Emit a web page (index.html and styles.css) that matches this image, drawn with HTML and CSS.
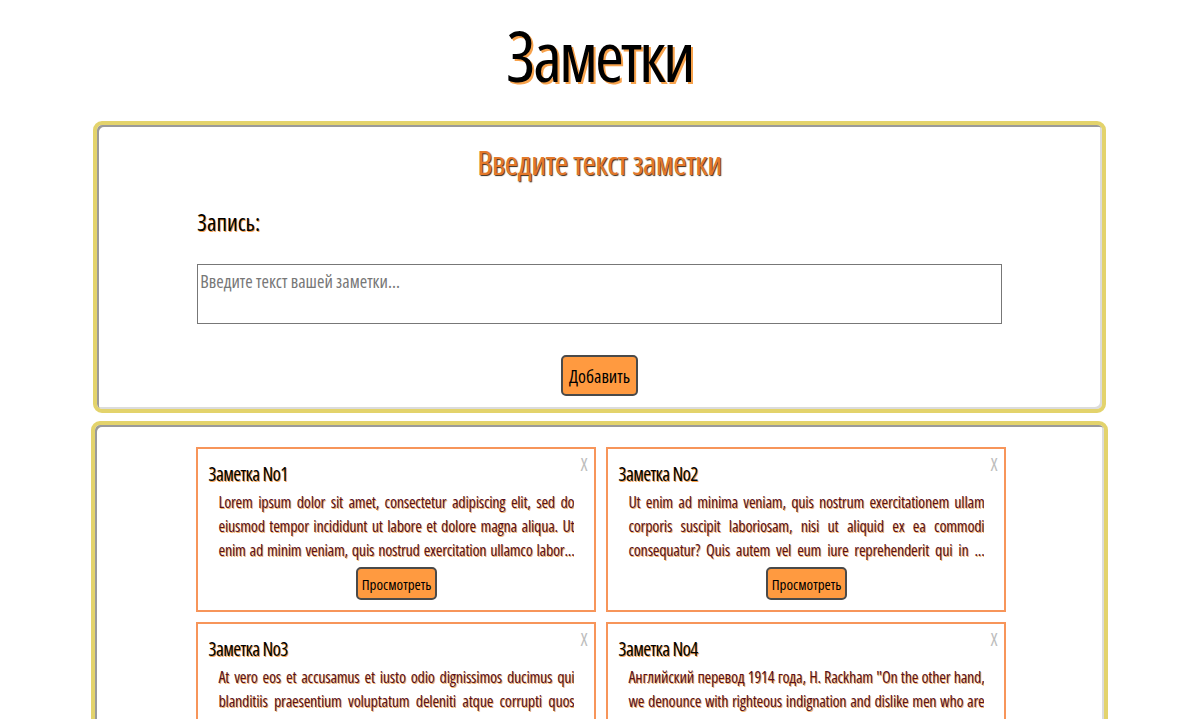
FILE: index.html
```html
<!DOCTYPE html>
<html lang="ru">
<head>
<meta charset="utf-8">
<title>Заметки</title>
<link rel="stylesheet" href="styles.css">
</head>
<body>
<h1 class="title">Заметки</h1>
<section class="panel form-panel">
  <h2 class="form-heading">Введите текст заметки</h2>
  <div class="field">
    <label class="field-label" for="note">Запись:</label>
    <textarea id="note" class="note-input" placeholder="Введите текст вашей заметки..."></textarea>
  </div>
  <div class="actions"><button class="btn btn-add">Добавить</button></div>
</section>
<section class="panel notes-panel">
  <div class="notes-grid">
    <article class="card">
      <span class="card-close">X</span>
      <h3 class="card-title">Заметка No1</h3>
      <p class="card-text">Lorem ipsum dolor sit amet, consectetur adipiscing elit, sed do eiusmod tempor incididunt ut labore et dolore magna aliqua. Ut enim ad minim veniam, quis nostrud exercitation ullamco labor...</p>
      <div class="card-actions"><button class="btn btn-view">Просмотреть</button></div>
    </article>
    <article class="card">
      <span class="card-close">X</span>
      <h3 class="card-title">Заметка No2</h3>
      <p class="card-text">Ut enim ad minima veniam, quis nostrum exercitationem ullam corporis suscipit laboriosam, nisi ut aliquid ex ea commodi consequatur? Quis autem vel eum iure reprehenderit qui in ...</p>
      <div class="card-actions"><button class="btn btn-view">Просмотреть</button></div>
    </article>
    <article class="card">
      <span class="card-close">X</span>
      <h3 class="card-title">Заметка No3</h3>
      <p class="card-text">At vero eos et accusamus et iusto odio dignissimos ducimus qui blanditiis praesentium voluptatum deleniti atque corrupti quos dolores et quas molestias excepturi sint occaecati cupiditate non...</p>
      <div class="card-actions"><button class="btn btn-view">Просмотреть</button></div>
    </article>
    <article class="card">
      <span class="card-close">X</span>
      <h3 class="card-title">Заметка No4</h3>
      <p class="card-text">Английский перевод 1914 года, H. Rackham "On the other hand, we denounce with righteous indignation and dislike men who are beguiled and demoralized by the charms of pleasure...</p>
      <div class="card-actions"><button class="btn btn-view">Просмотреть</button></div>
    </article>
  </div>
</section>
</body>
</html>
```
FILE: styles.css
```css
html, body {
  background: #fff;
}
body {
  margin: 8px;
  font-family: "Open Sans", "DejaVu Sans", sans-serif;
  font-stretch: 75%;
  color: #000;
}
.title {
  margin: 5px 0 24px;
  text-align: center;
  font-size: 70px;
  font-weight: 500;
  letter-spacing: -3px;
  line-height: 84px;
  text-shadow: 2px 2px 0 #f7a24c;
}
.panel {
  width: 85%;
  margin: 0 auto 8px;
  border: 4px solid #e3d36c;
  border-radius: 9px;
  box-shadow: inset 2px 2px 0 #9a9a9a, inset -2px -2px 0 #dcdcdc;
  background: #fff;
}
.form-panel {
  padding: 20px 0 13px;
}
.form-heading {
  margin: 0 0 26px;
  text-align: center;
  font-size: 32px;
  font-weight: 500;
  letter-spacing: -0.4px;
  line-height: 36px;
  color: #e3782a;
  text-shadow: 1px 1px 1px #3a2a1a;
}
.field {
  width: 80%;
  margin: 0 auto;
}
.field-label {
  display: block;
  font-size: 23px;
  font-weight: 500;
  line-height: 30px;
  margin-bottom: 27px;
  text-shadow: 1px 1px 0 #f7a24c;
}
.note-input {
  display: block;
  box-sizing: border-box;
  width: 100%;
  height: 60px;
  margin: 0;
  padding: 4px 2px;
  border: 1px solid #777;
  font-family: inherit;
  font-stretch: 75%;
  font-size: 18px;
  resize: none;
}
.note-input::placeholder {
  color: #777;
}
.actions {
  display: flex;
  justify-content: center;
  margin-top: 31px;
}
.btn {
  font-family: inherit;
  font-stretch: 75%;
  background: #ff9a40;
  color: #000;
  border: 2px solid #4a4a4a;
  border-radius: 5px;
  cursor: pointer;
}
.btn-add {
  height: 41px;
  padding: 0 6px;
  font-size: 18px;
}
.notes-panel {
  padding: 22px 0 10px 4px;
}
.notes-grid {
  display: grid;
  grid-template-columns: 400px 400px;
  gap: 10px;
  justify-content: center;
}
.card {
  position: relative;
  box-sizing: border-box;
  height: 165px;
  border: 2px solid #f7955a;
  padding: 13px 20px 0 10px;
}
.card-close {
  position: absolute;
  top: 3px;
  right: 7px;
  color: #bdbdbd;
  font-size: 18px;
}
.card-title {
  margin: 0 0 4px;
  font-size: 19px;
  font-weight: 500;
  letter-spacing: -0.6px;
  line-height: 24px;
  text-shadow: 1px 1px 0 #f7a24c;
}
.card-text {
  margin: 0 0 0 10px;
  font-size: 16px;
  letter-spacing: -0.2px;
  line-height: 24px;
  text-align: justify;
  text-align-last: justify;
  color: #5a0f1a;
  text-shadow: 1px 1px 0 #f2b36a;
  height: 72px;
  overflow: hidden;
}
.card-actions {
  display: flex;
  justify-content: center;
  margin-top: 5px;
  padding-left: 10px;
}
.btn-view {
  height: 33px;
  padding: 0 4px;
  font-size: 15px;
}
```
